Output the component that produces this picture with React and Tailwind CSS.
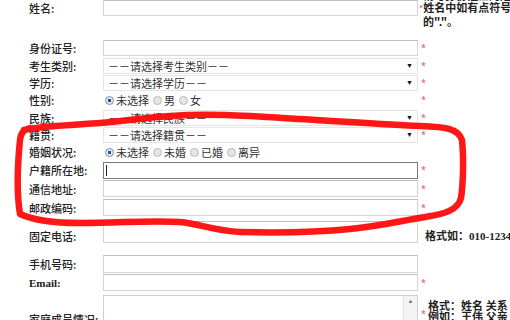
import React from "react";

const cjk = { fontFamily: '"Noto Sans CJK SC", "Liberation Sans", sans-serif' };
const serif = { fontFamily: '"Liberation Serif", "Noto Sans CJK SC", serif' };

function Label({ children, latin }) {
  return (
    <div
      className="w-[103px] shrink-0 pl-[29px] text-[11px] leading-[14px] text-[#222] font-medium whitespace-nowrap"
      style={latin ? { ...serif, fontWeight: 700 } : cjk}
    >
      {children}
    </div>
  );
}

function Star() {
  return <span className="text-[9px] text-[#d05a6a] ml-[3px]">*</span>;
}

function Input({ h = "h-[16px]", focus, extra = "" }) {
  return (
    <div
      className={`w-[315px] ${h} shrink-0 bg-white border ${
        focus ? "border-[#7b7b7b]" : "border-[#d4d4d4] border-t-[#bdbdbd]"
      } relative ${extra}`}
    >
      {focus && <div className="absolute left-[2px] top-[2px] bottom-[2px] w-px bg-[#222]" />}
    </div>
  );
}

function Select({ text }) {
  return (
    <div className="w-[315px] h-[16px] shrink-0 bg-white border border-[#e4e4e4] flex items-center justify-between pl-[4px] pr-[4px]">
      <span className="text-[11px] leading-[14px] text-[#333]" style={cjk}>
        {text}
      </span>
      <span className="text-[7px] text-[#111] leading-none">▼</span>
    </div>
  );
}

function Radio({ on, label }) {
  return (
    <span className="flex items-center mr-[4px]">
      <span
        className={`w-[9px] h-[9px] rounded-full border ${
          on ? "border-[#7a90b0] bg-[radial-gradient(circle,#2b4a7a_0,#2b4a7a_28%,#dfe8f3_38%)]" : "border-[#b8b8b8] bg-[#e6e6e6]"
        } mr-[2px]`}
      />
      <span className="text-[11px] leading-[14px] text-[#333]" style={cjk}>
        {label}
      </span>
    </span>
  );
}

function Radios({ items }) {
  return (
    <div className="w-[315px] shrink-0 flex items-center pl-[2px]">
      {items.map((t, i) => (
        <Radio key={t} on={i === 0} label={t} />
      ))}
    </div>
  );
}

export default function App() {
  return (
    <div className="relative w-[510px] h-[320px] overflow-hidden bg-white">
      {/* 姓名 */}
      <div className="flex items-start h-[39px]">
        <div className="h-[15px] flex items-center">
          <Label>姓名:</Label>
        </div>
        <Input />
        <div
          className="-mt-[11px] ml-[1px] text-[11px] leading-[12px] text-[#222] font-bold whitespace-nowrap"
          style={cjk}
        >
          <div className="ml-[4px]">请与身份证上的姓名一致</div>
          <div>
            <span className="text-[#d05a6a] font-normal text-[9px]">*</span>姓名中如有点符号请用
          </div>
          <div className="ml-[4px]">的"."。</div>
        </div>
      </div>
      {/* 身份证号 */}
      <div className="flex items-center h-[18px]">
        <Label>身份证号:</Label>
        <Input />
        <Star />
      </div>
      <div className="flex items-center h-[17px]">
        <Label>考生类别:</Label>
        <Select text="－－请选择考生类别－－" />
        <Star />
      </div>
      <div className="flex items-center h-[17px]">
        <Label>学历:</Label>
        <Select text="－－请选择学历－－" />
        <Star />
      </div>
      <div className="flex items-center h-[18px]">
        <Label>性别:</Label>
        <Radios items={["未选择", "男", "女"]} />
        <Star />
      </div>
      <div className="flex items-center h-[17px]">
        <Label>民族:</Label>
        <Select text="－－请选择民族－－" />
        <Star />
      </div>
      <div className="flex items-center h-[17px]">
        <Label>籍贯:</Label>
        <Select text="－－请选择籍贯－－" />
        <Star />
      </div>
      <div className="flex items-center h-[18px]">
        <Label>婚姻状况:</Label>
        <Radios items={["未选择", "未婚", "已婚", "离异"]} />
      </div>
      <div className="flex items-center h-[18px]">
        <Label>户籍所在地:</Label>
        <Input h="h-[17px]" focus />
        <Star />
      </div>
      <div className="flex items-center h-[19px]">
        <Label>通信地址:</Label>
        <Input h="h-[17px]" />
        <Star />
      </div>
      <div className="flex items-center h-[19px]">
        <Label>邮政编码:</Label>
        <Input h="h-[17px]" />
        <Star />
      </div>
      {/* 固定电话 */}
      <div className="flex items-center h-[37px]">
        <Label>固定电话:</Label>
        <Input h="h-[22px]" extra="self-start mt-[4px]" />
        <div className="ml-[7px] text-[11px] leading-[14px] text-[#222] font-bold whitespace-nowrap" style={serif}>
          格式如：010-12345678
        </div>
      </div>
      <div className="flex items-center h-[19px]">
        <Label>手机号码:</Label>
        <Input h="h-[18px]" />
      </div>
      <div className="flex items-center h-[19px]">
        <Label latin>Email:</Label>
        <Input h="h-[17px]" />
        <Star />
      </div>
      {/* 家庭成员情况 */}
      <div className="flex items-start h-[60px] pt-[3px]">
        <div className="mt-[17px]">
          <Label>家庭成员情况:</Label>
        </div>
        <div className="w-[315px] h-[50px] shrink-0 border border-[#d0d0d0] bg-white flex justify-end">
          <div className="w-[14px] h-full bg-[#f4f4f4] border-l border-[#e6e6e6] flex justify-center pt-[2px]">
            <span className="text-[6px] text-[#777] leading-none">▲</span>
          </div>
        </div>
        <div className="flex items-start mt-[6px]">
          <span className="text-[9px] text-[#d05a6a] ml-[3px] mt-[6px]">*</span>
          <div className="ml-[2px] text-[11px] leading-[11px] text-[#222] font-bold whitespace-nowrap" style={serif}>
            <div>格式：姓名 关系 身份</div>
            <div>例如：王伟 父亲 工人</div>
          </div>
        </div>
      </div>

      {/* hand-drawn red marker loop */}
      <svg className="absolute left-0 top-0 pointer-events-none" width="510" height="320" viewBox="0 0 510 320">
        <path
          d="M24 130 C 40 126, 70 125, 100 123 C 125 121, 140 118, 170 116 C 210 113, 250 116, 300 119 C 350 122, 390 125, 420 126 C 445 127, 458 128, 462 140 C 464 160, 463 185, 461 198 C 458 210, 445 214, 425 217 C 400 221, 380 226, 350 229 C 320 232, 280 233, 240 232 C 215 231, 200 224, 180 222 C 150 220, 120 223, 80 223 C 55 223, 35 221, 20 214 C 16 190, 18 160, 20 140 C 21 133, 23 130, 30 128"
          fill="none"
          stroke="#ff0a0a"
          strokeWidth="6.5"
          strokeLinecap="round"
          strokeLinejoin="round"
          opacity="0.95"
        />
      </svg>
    </div>
  );
}
